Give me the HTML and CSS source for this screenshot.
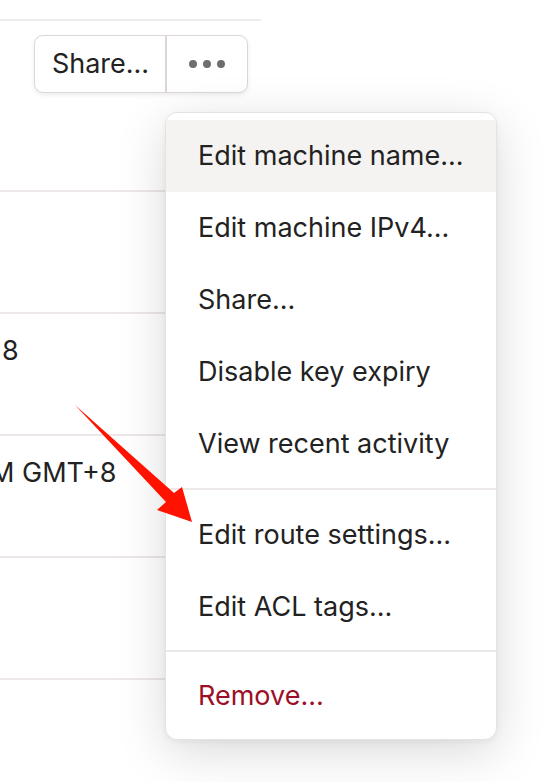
FILE: index.html
```html
<!DOCTYPE html>
<html>
<head>
<meta charset="utf-8">
<link rel="stylesheet" href="styles.css">
</head>
<body>
<div class="page">
  <div class="topline"></div>
  <div class="toolbar">
    <div class="btn-group">
      <button class="btn btn-share">Share...</button>
      <button class="btn btn-more" aria-label="More">
        <svg width="36" height="8" viewBox="0 0 36 8"><circle cx="4" cy="4" r="4" fill="#706d6d"/><circle cx="18" cy="4" r="4" fill="#706d6d"/><circle cx="32" cy="4" r="4" fill="#706d6d"/></svg>
      </button>
    </div>
  </div>
  <div class="table">
    <div class="row"></div>
    <div class="row"><span class="cell">8</span></div>
    <div class="row"><span class="cell cell-cut">M GMT+8</span></div>
    <div class="row"></div>
    <div class="row"></div>
  </div>

  <div class="menu">
    <div class="menu-group group-first">
      <div class="menu-item active">Edit machine name...</div>
      <div class="menu-item">Edit machine IPv4...</div>
      <div class="menu-item">Share...</div>
      <div class="menu-item">Disable key expiry</div>
      <div class="menu-item">View recent activity</div>
    </div>
    <div class="menu-sep"></div>
    <div class="menu-group group-mid">
      <div class="menu-item">Edit route settings...</div>
      <div class="menu-item">Edit ACL tags...</div>
    </div>
    <div class="menu-sep"></div>
    <div class="menu-group group-last">
      <div class="menu-item danger">Remove...</div>
    </div>
  </div>

  <svg class="arrow" width="556" height="782" viewBox="0 0 556 782">
    <polygon points="75,405 174,493 182,487 192,522 157,510 166,502" fill="#ff1200"/>
  </svg>
</div>
</body>
</html>
```

FILE: styles.css
```css
html, body {
  margin: 0;
  padding: 0;
  background: #ffffff;
}

body {
  font-family: Inter, "Noto Sans", "Liberation Sans", sans-serif;
  color: #232222;
  width: 556px;
  height: 782px;
  overflow: hidden;
}

.page {
  position: relative;
  width: 556px;
  height: 782px;
  overflow: hidden;
}

.topline {
  width: 261px;
  height: 21px;
  border-bottom: 2px solid #efebeb;
  box-sizing: border-box;
}

.toolbar {
  padding: 14px 0 0 34px;
  height: 169px;
  box-sizing: border-box;
}

.btn-group {
  display: inline-flex;
  height: 58px;
  border: 1px solid #dcd6d6;
  border-radius: 9px;
  background: #ffffff;
  box-shadow: 0 2px 5px rgba(0, 0, 0, 0.08);
  box-sizing: border-box;
  overflow: hidden;
}

.btn {
  font-family: inherit;
  font-size: 27px;
  color: #232222;
  background: transparent;
  border: none;
  margin: 0;
  display: flex;
  align-items: center;
  justify-content: center;
}

.btn-share {
  width: 132px;
  padding: 0 0 2px 1px;
  border-right: 2px solid #dcd6d6;
}

.btn-more {
  width: 80px;
  padding: 0;
}

.table {
  display: flex;
  flex-direction: column;
  width: 261px;
}

.row {
  height: 122px;
  border-top: 2px solid #ede7e7;
  box-sizing: border-box;
  display: flex;
  align-items: flex-start;
  padding-top: 20px;
  font-size: 27px;
  overflow: hidden;
}

.cell {
  margin-left: 2px;
  white-space: nowrap;
}

.cell-cut {
  margin-left: -10px;
}

.menu {
  position: absolute;
  left: 165px;
  top: 112px;
  width: 332px;
  box-sizing: border-box;
  background: #ffffff;
  border: 1px solid #e6e2e2;
  border-radius: 12px;
  box-shadow: 0 12px 50px rgba(0, 0, 0, 0.15), 0 2px 6px rgba(0, 0, 0, 0.05);
  padding: 0;
  overflow: hidden;
}

.group-first {
  padding: 7px 0 8px 0;
}

.group-mid {
  padding: 9px 0 7px 0;
}

.group-last {
  padding: 8px 0 7px 0;
}

.menu-item {
  height: 72px;
  display: flex;
  align-items: center;
  padding-left: 32px;
  padding-bottom: 2px;
  box-sizing: border-box;
  font-size: 27px;
  color: #232222;
  white-space: nowrap;
}

.menu-item.active {
  background: #f5f3f2;
}

.menu-item.danger {
  color: #9b0f27;
}

.menu-sep {
  height: 2px;
  background: #ede9e9;
}

.arrow {
  position: absolute;
  left: 0;
  top: 0;
  pointer-events: none;
}
```
